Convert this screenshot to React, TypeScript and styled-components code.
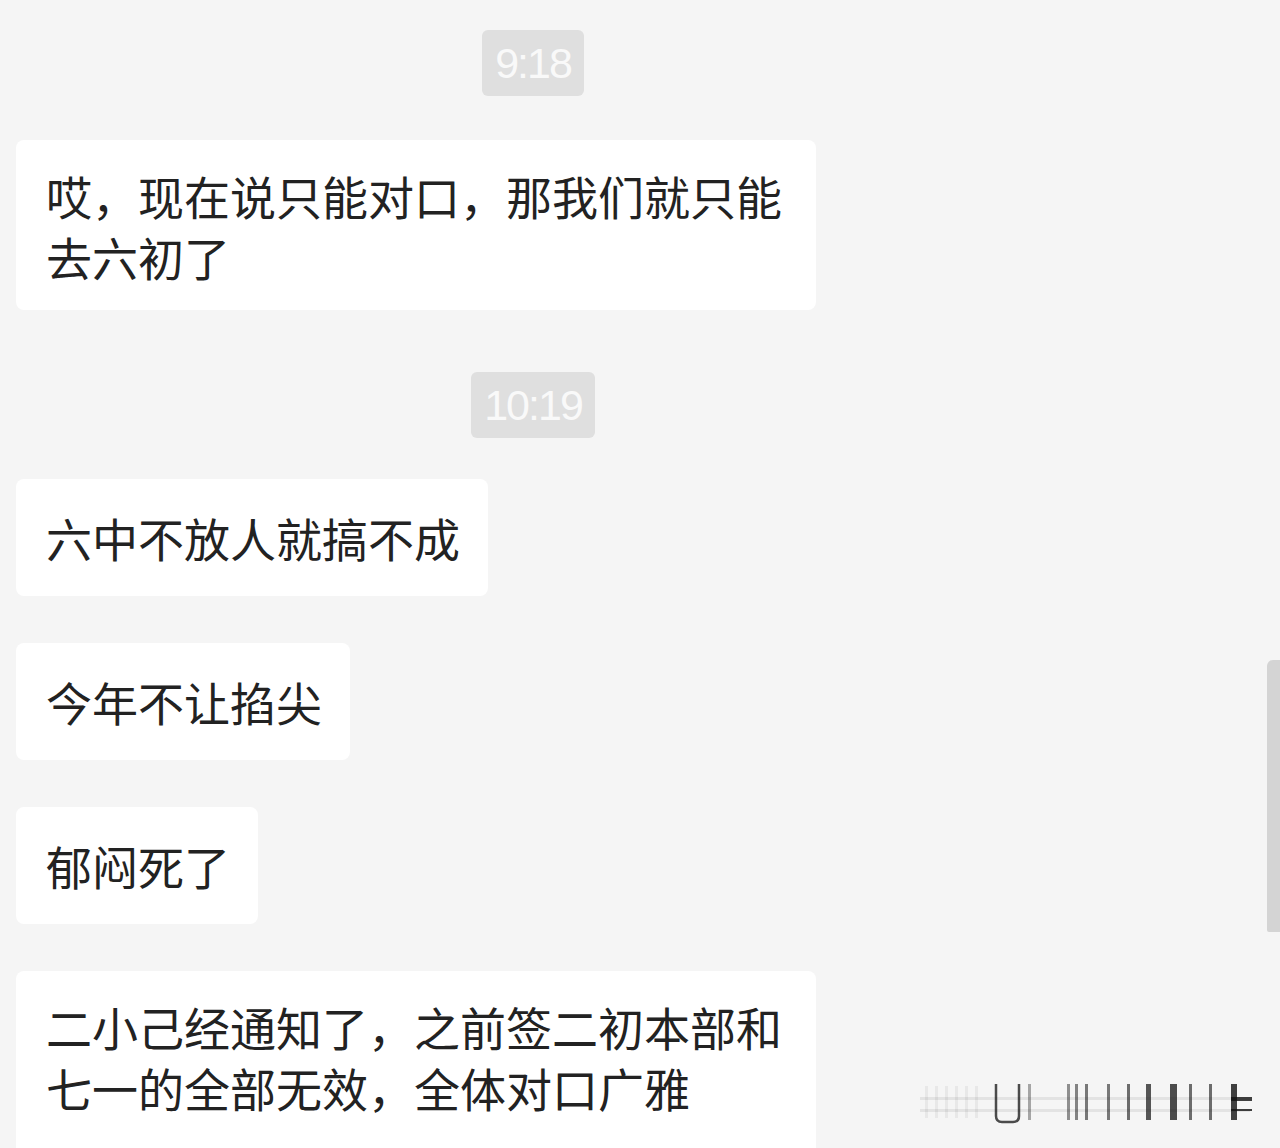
import React from 'react'
import styled, { createGlobalStyle } from 'styled-components'

const GlobalStyle = createGlobalStyle`
  html, body {
    margin: 0;
    padding: 0;
    background: #f5f5f5;
    overflow: hidden;
  }
  #root {
    height: 1148px;
  }
`

const Screen = styled.div`
  position: relative;
  width: 1280px;
  height: 1148px;
  overflow: hidden;
  background: #f5f5f5;
  font-family: 'Noto Sans CJK SC', 'Noto Sans', sans-serif;
`

const Feed = styled.div`
  display: flex;
  flex-direction: column;
  align-items: flex-start;
  gap: 47px;
  padding: 30px 0 0 16px;
`

const TimeRow = styled.div<{ $top?: number; $bottom?: number }>`
  align-self: stretch;
  display: flex;
  justify-content: center;
  padding-right: 230px;
  margin-top: ${(p) => p.$top || 0}px;
  margin-bottom: ${(p) => p.$bottom || 0}px;
`

const TimeTag = styled.div`
  height: 66px;
  display: flex;
  align-items: center;
  padding: 0 13px;
  border-radius: 6px;
  background: #dfdfdf;
  color: #f9f9f9;
  font-family: 'Liberation Sans', Arial, sans-serif;
  font-size: 43px;
  letter-spacing: -2px;
`

const Bubble = styled.div<{ $multi?: boolean; $cut?: boolean }>`
  box-sizing: border-box;
  max-width: 800px;
  padding: ${(p) => (p.$multi ? '25px 34px 23px 30px' : '28px 28px 28px 30px')};
  padding-bottom: ${(p) => (p.$cut ? '60px' : undefined)};
  background: #ffffff;
  border-radius: 8px;
  color: #222222;
  font-size: 46px;
  line-height: 61px;
  word-break: break-all;
`

const ScrollThumb = styled.div`
  position: absolute;
  right: 0;
  top: 660px;
  width: 13px;
  height: 272px;
  background: #d4d4d4;
  border-top-left-radius: 6px;
  border-bottom-left-radius: 2px;
`

const Mark = styled.svg`
  position: absolute;
  left: 915px;
  top: 1078px;
`

const bars = [
  { x: 113, w: 3, o: 0.35 },
  { x: 152, w: 3, o: 0.45 },
  { x: 160, w: 3, o: 0.5 },
  { x: 170, w: 3, o: 0.55 },
  { x: 192, w: 3, o: 0.55 },
  { x: 212, w: 3, o: 0.6 },
  { x: 231, w: 5, o: 0.7 },
  { x: 255, w: 7, o: 0.75 },
  { x: 274, w: 3, o: 0.6 },
  { x: 294, w: 3, o: 0.6 },
  { x: 316, w: 6, o: 0.8 },
]

const Watermark = () => (
  <Mark width="345" height="52" viewBox="0 0 345 52">
    <rect x="5" y="19" width="330" height="3" fill="#000" opacity="0.07" />
    <rect x="5" y="31" width="330" height="3" fill="#000" opacity="0.07" />
    {[10, 20, 30, 40, 50, 60].map((x) => (
      <rect key={x} x={x} y="8" width="3" height="32" fill="#000" opacity="0.05" />
    ))}
    <path d="M81 6 V38 Q81 44 87 44 H98 Q104 44 104 38 V6" fill="none" stroke="#111" strokeWidth="2.5" opacity="0.75" />
    {bars.map((b) => (
      <rect key={b.x} x={b.x} y="6" width={b.w} height="36" fill="#111" opacity={b.o} />
    ))}
    <rect x="316" y="19" width="21" height="4" fill="#111" opacity="0.8" />
    <rect x="316" y="31" width="21" height="2" fill="#111" opacity="0.8" />
  </Mark>
)

const App = () => (
  <>
    <GlobalStyle />
    <Screen>
      <Feed>
        <TimeRow $bottom={-3}>
          <TimeTag>9:18</TimeTag>
        </TimeRow>
        <Bubble $multi>哎，现在说只能对口，那我们就只能去六初了</Bubble>
        <TimeRow $top={15} $bottom={-6}>
          <TimeTag>10:19</TimeTag>
        </TimeRow>
        <Bubble>六中不放人就搞不成</Bubble>
        <Bubble>今年不让掐尖</Bubble>
        <Bubble>郁闷死了</Bubble>
        <Bubble $multi $cut>二小己经通知了，之前签二初本部和七一的全部无效，全体对口广雅</Bubble>
      </Feed>
      <ScrollThumb />
      <Watermark />
    </Screen>
  </>
)

export default App
